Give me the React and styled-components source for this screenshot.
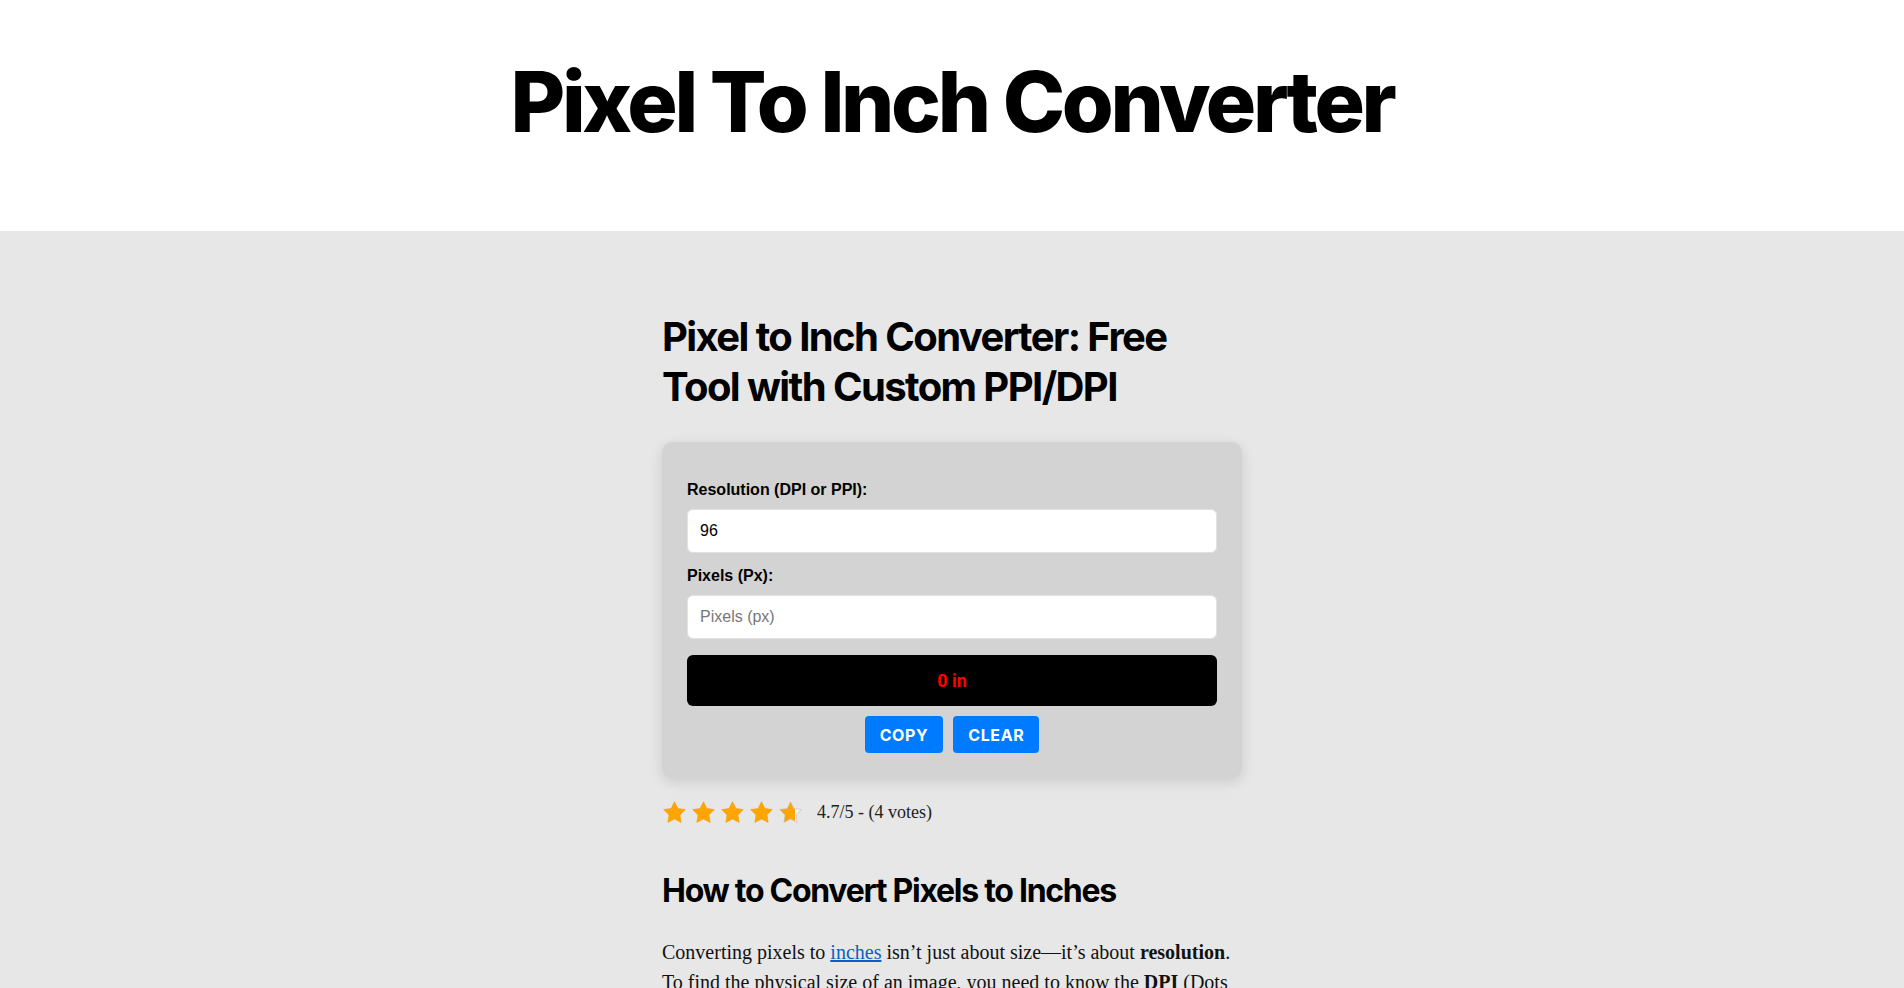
import React, { useState } from 'react';
import styled, { createGlobalStyle } from 'styled-components';

const GlobalStyle = createGlobalStyle`
  body {
    margin: 0;
    background: #e7e7e7;
    font-family: "Liberation Serif", "Times New Roman", serif;
  }
`;

const Header = styled.header`
  background: #ffffff;
  height: 231px;
  box-sizing: border-box;
  padding-top: 52px;
  text-align: center;
`;

const Title = styled.h1`
  margin: 0;
  font-family: Inter, "Noto Sans", sans-serif;
  font-size: 84px;
  font-weight: 800;
  letter-spacing: -0.04em;
  line-height: 1.2;
  color: #000;
`;

const Main = styled.main`
  width: 580px;
  margin: 0 auto;
  padding-top: 81px;
`;

const Heading = styled.h2`
  margin: 0 0 ${props => props.gap || 0}px;
  font-family: Inter, "Noto Sans", sans-serif;
  font-size: ${props => props.size}px;
  font-weight: 700;
  letter-spacing: -0.04em;
  line-height: 1.25;
  color: #000;
`;

const Card = styled.section`
  background: #d3d3d3;
  border-radius: 10px;
  padding: 39px 25px 25px;
  box-shadow: 0 4px 14px rgba(0, 0, 0, 0.12);
`;

const Label = styled.label`
  display: block;
  margin-bottom: 10px;
  font-family: "Liberation Sans", Arial, sans-serif;
  font-size: 16px;
  font-weight: 700;
  color: #000;
`;

const Input = styled.input`
  display: block;
  width: 100%;
  height: 44px;
  box-sizing: border-box;
  margin-bottom: ${props => props.gap}px;
  padding: 0 12px;
  border: 1px solid #e2e2e2;
  border-radius: 6px;
  background: #fff;
  font-family: "Liberation Sans", Arial, sans-serif;
  font-size: 16px;
  color: #000;
  outline: none;

  &::placeholder {
    color: #777;
  }
`;

const Result = styled.div`
  height: 51px;
  border-radius: 6px;
  background: #000;
  display: flex;
  align-items: center;
  justify-content: center;
  font-family: Roboto, "Liberation Sans", sans-serif;
  font-size: 18px;
  font-weight: 700;
  color: #ff0000;
`;

const Actions = styled.div`
  display: flex;
  justify-content: center;
  gap: 10px;
  margin-top: 10px;
`;

const ActionButton = styled.button`
  height: 37px;
  padding: 0 15px;
  border: none;
  border-radius: 4px;
  background: #007bff;
  color: #fff;
  font-family: Inter, Roboto, sans-serif;
  font-size: 16px;
  font-weight: 700;
  letter-spacing: 0.6px;
  text-transform: uppercase;
  cursor: pointer;
`;

const Rating = styled.div`
  display: flex;
  align-items: center;
  margin: 22px 0 47px;
`;

const Stars = styled.div`
  display: flex;
  gap: 4px;
`;

const RatingText = styled.span`
  margin-left: 14px;
  font-size: 18px;
  color: #222;
`;

const Paragraph = styled.p`
  margin: 0;
  font-size: 20px;
  line-height: 30px;
  color: #111;
`;

const TextLink = styled.a`
  color: #0a5fc4;
  text-decoration: underline;
`;

const STAR = 'M12 1.6l3.2 6.6 7.2 1-5.2 5.1 1.2 7.2L12 18.1l-6.4 3.4 1.2-7.2L1.6 9.2l7.2-1z';

const Star = ({ fill = 1, id }) => (
  <svg width="25" height="24" viewBox="0 0 24 23">
    <defs>
      <linearGradient id={id}>
        <stop offset={fill} stopColor="#ffa500" />
        <stop offset={fill} stopColor="#f4f4f4" />
      </linearGradient>
    </defs>
    <path d={STAR} fill={`url(#${id})`} stroke={fill < 1 ? '#bdbdbd' : '#f0a000'} strokeWidth="0.6" strokeLinejoin="round" />
  </svg>
);

export default function App() {
  const [dpi, setDpi] = useState('96');
  const [px, setPx] = useState('');

  const inches = px && Number(dpi) ? +(Number(px) / Number(dpi)).toFixed(4) : 0;

  return (
    <>
      <GlobalStyle />
      <Header>
        <Title>Pixel To Inch Converter</Title>
      </Header>
      <Main>
        <Heading size={40} gap={30}>Pixel to Inch Converter: Free Tool with Custom PPI/DPI</Heading>
        <Card>
          <Label htmlFor="dpi">Resolution (DPI or PPI):</Label>
          <Input id="dpi" gap={14} value={dpi} onChange={e => setDpi(e.target.value)} />
          <Label htmlFor="px">Pixels (Px):</Label>
          <Input id="px" gap={16} placeholder="Pixels (px)" value={px} onChange={e => setPx(e.target.value)} />
          <Result>{inches} in</Result>
          <Actions>
            <ActionButton onClick={() => navigator.clipboard && navigator.clipboard.writeText(`${inches} in`)}>Copy</ActionButton>
            <ActionButton onClick={() => setPx('')}>Clear</ActionButton>
          </Actions>
        </Card>
        <Rating>
          <Stars>
            {[1, 1, 1, 1, 0.7].map((f, i) => (
              <Star key={i} id={`star-${i}`} fill={f} />
            ))}
          </Stars>
          <RatingText>4.7/5 - (4 votes)</RatingText>
        </Rating>
        <Heading size={32} gap={26}>How to Convert Pixels to Inches</Heading>
        <Paragraph>
          Converting pixels to <TextLink href="#">inches</TextLink> isn’t just about size—it’s about <strong>resolution</strong>.
          To find the physical size of an image, you need to know the <strong>DPI</strong> (Dots Per Inch) or <strong>PPI</strong> (Pixels
          Per Inch) of the device or printer that will display it.
        </Paragraph>
      </Main>
    </>
  );
}
